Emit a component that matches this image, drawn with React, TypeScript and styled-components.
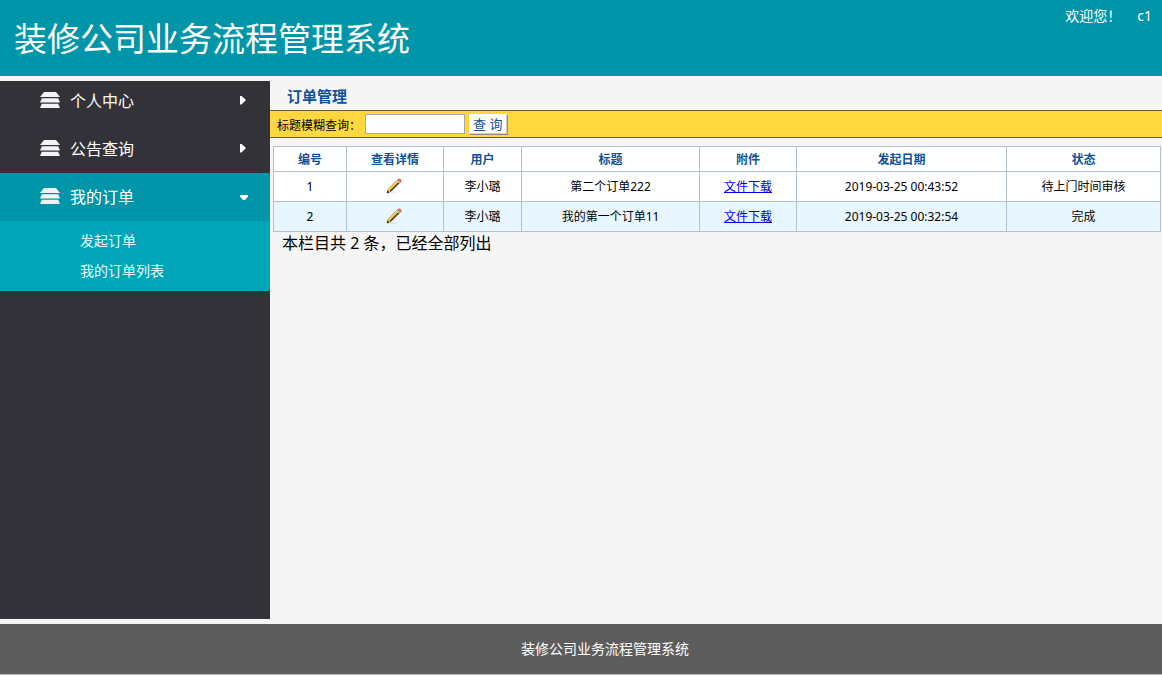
import React from "react";
import styled, { createGlobalStyle, css } from "styled-components";

const GlobalStyle = createGlobalStyle`
  * { box-sizing: border-box; }
  body {
    margin: 0;
    background: #fff;
    color: #000;
    font-family: "Noto Sans", "Noto Sans CJK SC", sans-serif;
  }
`;

const Page = styled.div`
  display: flex;
  flex-direction: column;
  min-height: 100vh;
  padding-bottom: 2px;
`;

const Header = styled.header`
  display: flex;
  justify-content: space-between;
  align-items: flex-start;
  height: 76px;
  padding: 0 10px 0 14px;
  background: #0095a8;
  color: #fff;
`;

const SiteTitle = styled.h1`
  margin: 0;
  font-size: 33px;
  line-height: 78px;
  font-weight: 400;
`;

const Welcome = styled.p`
  display: flex;
  gap: 16px;
  margin: 0;
  padding-top: 6px;
  font-size: 14px;
  line-height: 20px;
`;

const Body = styled.div`
  display: flex;
  flex: 1;
  padding: 5px 0;
  background: #f5f5f5;
`;

const Sidebar = styled.nav`
  flex: none;
  width: 270px;
  background: #323238;
`;

const MenuButton = styled.button<{ $active?: boolean; $first?: boolean }>`
  display: flex;
  align-items: center;
  gap: 10px;
  width: 100%;
  height: ${(p) => (p.$first ? 44 : 48)}px;
  padding: 0 22px ${(p) => (p.$first ? 6 : 2)}px 40px;
  border: 0;
  background: ${(p) => (p.$active ? "#0095a8" : "transparent")};
  color: #fff;
  font: inherit;
  font-size: 16px;
  text-align: left;
`;

const MenuLabel = styled.span`
  flex: 1;
`;

const ArrowBox = styled.span`
  display: flex;
  width: 8px;
`;

const SubMenu = styled.div`
  padding: 5px 0;
  background: #00a5b8;
`;

const SubLink = styled.a`
  display: block;
  padding-left: 80px;
  color: #e8fbff;
  font-size: 14px;
  line-height: 30px;
  text-decoration: none;
`;

const Main = styled.main`
  flex: 1;
  min-width: 0;
`;

const Heading = styled.h2`
  margin: 0;
  padding: 2px 0 0 17px;
  color: #0f5298;
  font-size: 15px;
  line-height: 27px;
  font-weight: 700;
`;

const SearchBar = styled.form`
  display: flex;
  align-items: center;
  height: 28px;
  padding-left: 7px;
  border: solid #6b5f33;
  border-width: 1px 0;
  background: #ffd73e;
  font-size: 12px;
`;

const SearchLabel = styled.label`
  width: 88px;
  padding-top: 2px;
`;

const SearchInput = styled.input`
  width: 100px;
  height: 20px;
  margin-right: 4px;
  padding: 0 4px;
  border: 1px solid #a9a9a9;
  background: #fff;
`;

const SearchButton = styled.button`
  height: 21px;
  padding: 0 5px 0 3px;
  border: 1px solid;
  border-color: #fff #8a8a8a #8a8a8a #fff;
  box-shadow: inset -1px -1px #d0d0d0;
  background: #fff;
  color: #0f5298;
  font: inherit;
  font-size: 13px;
  line-height: 18px;
`;

const Orders = styled.table`
  width: calc(100% - 4px);
  margin: 8px 1px 0 3px;
  border-collapse: collapse;
  table-layout: fixed;
  font-size: 12px;
  line-height: 16px;
  text-align: center;
`;

const cell = css`
  padding: 0;
  border: 1px solid #b2c1cc;
`;

const Th = styled.th`
  ${cell}
  height: 25px;
  padding-top: 2px;
  background: #fff;
  color: #0f5298;
`;

const Td = styled.td`
  ${cell}
  height: 30px;
`;

const Row = styled.tr<{ $even: boolean }>`
  background: ${(p) => (p.$even ? "#e8f6ff" : "#fff")};
`;

const EditButton = styled.button`
  display: block;
  margin: 0 auto;
  padding: 0 2px 2px 0;
  border: 0;
  background: none;
  line-height: 0;
`;

const FileLink = styled.a`
  color: #0000ee;
`;

const Summary = styled.p`
  margin: 0;
  padding-left: 12px;
  font-size: 16px;
  line-height: 22px;
`;

const Footer = styled.footer`
  height: 51px;
  border-bottom: 1px solid #b4b4b4;
  background: #5d5d5d;
  color: #fff;
  font-size: 14px;
  line-height: 50px;
  padding-left: 48px;
  text-align: center;
`;

const StackIcon = () => (
  <svg width="20" height="16" viewBox="0 0 20 16" fill="#f4f4f4" aria-hidden="true">
    <path d="M4 0h12l4 5H0z" />
    <path d="M1.8 6.2h16.4L20 10.6H0z" />
    <path d="M1.8 11.8h16.4L20 16H0z" />
  </svg>
);

const Arrow = ({ open }: { open: boolean }) => (
  <svg width="8" height="10" viewBox="0 0 8 10" fill="#fff" aria-hidden="true">
    {open ? <path d="M0 5q0-1 1-1h6q1 0 1 1v.6L5 9H3L0 5.600z" /> : <path d="M0 1h1.500L5.500 4.500v1L1.500 9.500H0z" />}
  </svg>
);

const PencilIcon = () => (
  <svg width="16" height="16" viewBox="0 0 16 16" aria-hidden="true">
    <path d="M2 15.5h9l-1-1H3z" fill="#000" opacity=".12" />
    <path d="M1.2 14.8 2 11.4 11.2 2l2.6 2.400L4.800 13.600z" fill="#edb93c" stroke="#7a5f28" strokeWidth=".6" />
    <path d="M2.800 11.600 11.400 2.800" stroke="#ffe58c" strokeWidth="1" />
    <path d="M4.300 13.200 13.200 4.500" stroke="#4c3512" strokeWidth="1.200" />
    <path d="m11.300 1.900 1.300-1.100q1.200-.3 2.200.8t.3 2L13.900 4.900z" fill="#d9705f" stroke="#a85a4c" strokeWidth=".4" />
    <path d="m10.500 2.700.9-.9 2.700 2.700-.9.9z" fill="#c9c4b8" />
    <path d="m.800 15.300.8-2.800 1.800 1.900z" fill="#222" />
  </svg>
);

const columns = [
  { name: "编号", width: 73 },
  { name: "查看详情", width: 97 },
  { name: "用户", width: 78 },
  { name: "标题", width: 178 },
  { name: "附件", width: 97 },
  { name: "发起日期", width: 210 },
  { name: "状态", width: 154 },
];
const total = columns.reduce((sum, c) => sum + c.width, 0);

const orders = [
  { id: 1, user: "李小璐", title: "第二个订单222", date: "2019-03-25 00:43:52", status: "待上门时间审核" },
  { id: 2, user: "李小璐", title: "我的第一个订单11", date: "2019-03-25 00:32:54", status: "完成" },
];

const menu = [
  { label: "个人中心", children: [] },
  { label: "公告查询", children: [] },
  { label: "我的订单", children: ["发起订单", "我的订单列表"] },
];

export default function App() {
  return (
    <>
      <GlobalStyle />
      <Page>
        <Header>
          <SiteTitle>装修公司业务流程管理系统</SiteTitle>
          <Welcome>
            <span>欢迎您！</span>
            <span>c1</span>
          </Welcome>
        </Header>
        <Body>
          <Sidebar>
            {menu.map((item, i) => {
              const open = item.children.length > 0;
              return (
                <React.Fragment key={item.label}>
                  <MenuButton type="button" $active={open} $first={i === 0} aria-expanded={open}>
                    <StackIcon />
                    <MenuLabel>{item.label}</MenuLabel>
                    <ArrowBox>
                      <Arrow open={open} />
                    </ArrowBox>
                  </MenuButton>
                  {open && (
                    <SubMenu>
                      {item.children.map((child) => (
                        <SubLink key={child} href="#">
                          {child}
                        </SubLink>
                      ))}
                    </SubMenu>
                  )}
                </React.Fragment>
              );
            })}
          </Sidebar>
          <Main>
            <Heading>订单管理</Heading>
            <SearchBar onSubmit={(e) => e.preventDefault()}>
              <SearchLabel htmlFor="keyword">标题模糊查询：</SearchLabel>
              <SearchInput id="keyword" type="text" />
              <SearchButton type="submit">查 询</SearchButton>
            </SearchBar>
            <Orders>
              <colgroup>
                {columns.map((c) => (
                  <col key={c.name} style={{ width: `${(c.width / total) * 100}%` }} />
                ))}
              </colgroup>
              <thead>
                <tr>
                  {columns.map((c) => (
                    <Th key={c.name} scope="col">
                      {c.name}
                    </Th>
                  ))}
                </tr>
              </thead>
              <tbody>
                {orders.map((o, i) => (
                  <Row key={o.id} $even={i % 2 === 1}>
                    <Td>{o.id}</Td>
                    <Td>
                      <EditButton type="button" aria-label="查看详情">
                        <PencilIcon />
                      </EditButton>
                    </Td>
                    <Td>{o.user}</Td>
                    <Td>{o.title}</Td>
                    <Td>
                      <FileLink href="#">文件下载</FileLink>
                    </Td>
                    <Td>{o.date}</Td>
                    <Td>{o.status}</Td>
                  </Row>
                ))}
              </tbody>
            </Orders>
            <Summary>本栏目共 2 条，已经全部列出</Summary>
          </Main>
        </Body>
        <Footer>装修公司业务流程管理系统</Footer>
      </Page>
    </>
  );
}
